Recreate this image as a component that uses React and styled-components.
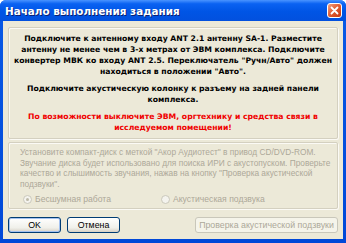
import React from 'react';
import styled, { createGlobalStyle } from 'styled-components';

const Global = createGlobalStyle`
  html, body { margin: 0; padding: 0; background: #fff; }
  body { font-family: "Liberation Sans", "DejaVu Sans", sans-serif; }
`;

const Window = styled.div`
  width: 346px;
  height: 243px;
  box-sizing: border-box;
  background: linear-gradient(180deg, #0a5ae6 0%, #0048d8 100%);
  padding: 0 3px 4px 3px;
  display: flex;
  flex-direction: column;
  border-radius: 6px 6px 0 0;
`;

const TitleBar = styled.div`
  height: 21px;
  display: flex;
  align-items: center;
  justify-content: space-between;
  background: linear-gradient(180deg, #4a94ff 0%, #0a62f2 18%, #0055e5 55%, #0250de 100%);
  margin: 0 -3px;
  padding-left: 5px;
  padding-right: 4px;
  border-radius: 6px 6px 0 0;
`;

const Title = styled.span`
  color: #fff;
  font-family: "DejaVu Sans", sans-serif;
  font-weight: bold;
  font-size: 10.4px;
  text-shadow: 1px 1px 0 #0a1f70;
`;

const CloseBtn = styled.div`
  width: 15px;
  height: 15px;
  box-sizing: border-box;
  border: 1px solid #fff;
  border-radius: 3px;
  background: linear-gradient(135deg, #f4a080 0%, #e05a30 50%, #c83a10 100%);
  display: flex;
  align-items: center;
  justify-content: center;
`;

const Body = styled.div`
  flex: 1;
  background: #ece9d8;
  padding: 6px 5px 6px 5px;
  display: flex;
  flex-direction: column;
`;

const Panel = styled.div`
  box-sizing: border-box;
  height: ${p => p.$h}px;
  border: 1px solid #d4d0c0;
  box-shadow: inset 1px 1px 0 #fbfaf5, 1px 1px 0 #fbfaf5;
  border-radius: 2px;
  margin-bottom: ${p => p.$mb}px;
  padding: ${p => p.$pad};
`;

const Para = styled.p`
  margin: 0 0 ${p => p.$mb || 0}px 0;
  text-align: center;
  font-family: "DejaVu Sans", sans-serif;
  font-weight: bold;
  font-size: 7.7px;
  line-height: 11px;
  color: ${p => (p.$red ? '#f00000' : '#000')};
`;

const Info = styled.p`
  margin: 0;
  font-size: 8.3px;
  line-height: 10.5px;
  color: #aca899;
`;

const RadioRow = styled.div`
  display: flex;
  margin-top: 5px;
  padding-left: 3px;
`;

const Radio = styled.label`
  display: flex;
  align-items: center;
  gap: 3px;
  width: ${p => p.$w}px;
  font-size: 8.6px;
  color: #aca899;
`;

const Dot = styled.span`
  width: 9px;
  height: 9px;
  box-sizing: border-box;
  border-radius: 50%;
  border: 1px solid #cac8bb;
  background: #f4f3ee;
  display: flex;
  align-items: center;
  justify-content: center;
  &::after {
    content: '';
    display: ${p => (p.$on ? 'block' : 'none')};
    width: 3px;
    height: 3px;
    border-radius: 50%;
    background: #bdbaa8;
  }
`;

const ButtonRow = styled.div`
  display: flex;
  align-items: center;
  margin-top: auto;
`;

const Button = styled.button`
  width: ${p => p.$w}px;
  height: 16px;
  box-sizing: border-box;
  margin-right: ${p => p.$mr || 0}px;
  margin-left: ${p => p.$ml || 0};
  border: 1px solid ${p => (p.$disabled ? '#c9c7ba' : '#003c74')};
  border-radius: 3px;
  background: ${p => (p.$disabled ? '#f5f4ea' : 'linear-gradient(180deg, #ffffff 0%, #f0f0ea 70%, #d6d0c5 100%)')};
  box-shadow: ${p => (p.$def ? 'inset 0 0 0 1px #a4c2f0, inset 0 -1px 0 #9db9eb' : 'none')};
  font-family: "Liberation Sans", "DejaVu Sans", sans-serif;
  font-size: 8.8px;
  white-space: nowrap;
  color: ${p => (p.$disabled ? '#aca899' : '#000')};
  padding: 0;
`;

export default function App() {
  return (
    <>
      <Global />
      <Window>
        <TitleBar>
          <Title>Начало выполнения задания</Title>
          <CloseBtn>
            <svg width="9" height="9" viewBox="0 0 9 9">
              <path d="M1.5 1.5 L7.5 7.5 M7.5 1.5 L1.5 7.5" stroke="#fff" strokeWidth="1.8" strokeLinecap="round" />
            </svg>
          </CloseBtn>
        </TitleBar>
        <Body>
          <Panel $h={112} $mb={3} $pad="5px 3px 0 3px">
            <Para $mb={6}>
              Подключите к антенному входу ANT 2.1 антенну SA-1. Разместите антенну не менее чем в 3-х метрах от ЭВМ комплекса. Подключите конвертер МВК ко входу ANT 2.5. Переключатель "Ручн/Авто" должен находиться в положении "Авто".
            </Para>
            <Para $mb={6}>
              Подключите акустическую колонку к разъему на задней панели комплекса.
            </Para>
            <Para $red>
              По возможности выключите ЭВМ, оргтехнику и средства связи в исследуемом помещении!
            </Para>
          </Panel>
          <Panel $h={67} $mb={0} $pad="4px 5px 0 11px">
            <Info>
              Установите компакт-диск с меткой "Акор Аудиотест" в привод CD/DVD-ROM. Звучание диска будет использовано для поиска ИРИ с акустопуском. Проверьте качество и слышимость звучания, нажав на кнопку "Проверка акустической подзвуки".
            </Info>
            <RadioRow>
              <Radio $w={138}><Dot $on />Бесшумная работа</Radio>
              <Radio $w={150}><Dot />Акустическая подзвука</Radio>
            </RadioRow>
          </Panel>
          <ButtonRow>
            <Button $w={53} $mr={6} $def>OK</Button>
            <Button $w={53}>Отмена</Button>
            <Button $w={143} $ml="auto" $disabled>Проверка акустической подзвуки</Button>
          </ButtonRow>
        </Body>
      </Window>
    </>
  );
}
